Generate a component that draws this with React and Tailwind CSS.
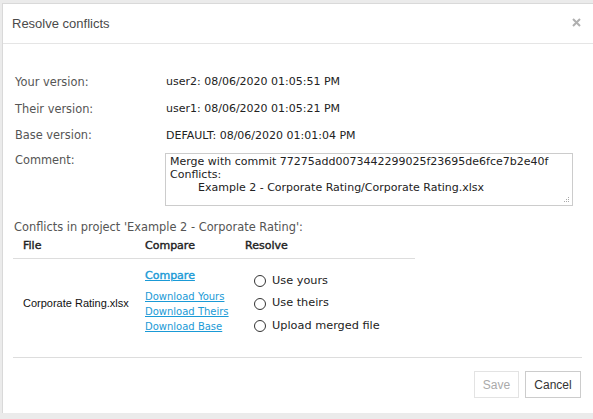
import React from "react";

const body = { fontFamily: '"DejaVu Sans", Verdana, sans-serif' };
const arial = { fontFamily: '"Liberation Sans", Arial, sans-serif' };

function Radio({ label }) {
  return (
    <label className="flex items-center h-[22.5px]">
      <span className="w-[12px] h-[12px] rounded-full border border-[#333] bg-white mr-[6px]"></span>
      <span className="text-[11.3px] text-[#222]">{label}</span>
    </label>
  );
}

export default function App() {
  const comment =
    "Merge with commit 77275add0073442299025f23695de6fce7b2e40f\nConflicts:\n\tExample 2 - Corporate Rating/Corporate Rating.xlsx";
  return (
    <div className="w-[593px] h-[419px] bg-[#ebebeb] pt-[3px] pl-[2px] overflow-hidden" style={body}>
      <div className="h-[410px] bg-white border-l border-t border-[#d9d9d9] flex flex-col">
        <div className="h-[40px] flex items-center justify-between pl-[9px] pr-[12px] border-b border-[#e5e5e5]">
          <span className="text-[13px] text-[#4a4a4a]" style={arial}>Resolve conflicts</span>
          <svg width="9" height="9" viewBox="0 0 9 9" className="mb-[2px]">
            <path d="M1 1L8 8M8 1L1 8" stroke="#b0b0b0" strokeWidth="2" />
          </svg>
        </div>
        <div className="pl-[12px] pr-[11px] pt-[25px] text-[11px]">
          <div className="flex items-center h-[27px]">
            <span className="w-[151px] text-[11.4px] text-[#555]">Your version:</span>
            <span className="text-[#222]">user2: 08/06/2020 01:05:51 PM</span>
          </div>
          <div className="flex items-center h-[27px]">
            <span className="w-[151px] text-[11.4px] text-[#555]">Their version:</span>
            <span className="text-[#222]">user1: 08/06/2020 01:05:21 PM</span>
          </div>
          <div className="flex items-center h-[26px]">
            <span className="w-[151px] text-[11.4px] text-[#555]">Base version:</span>
            <span className="text-[#222]">DEFAULT: 08/06/2020 01:01:04 PM</span>
          </div>
          <div className="flex mt-[4px]">
            <span className="w-[150px] text-[11.4px] text-[#555] pt-[1px] leading-[13px]">Comment:</span>
            <div className="relative">
              <textarea
                readOnly
                value={comment}
                className="block w-[408px] h-[53px] border border-[#ccc] px-[4px] py-[1px] text-[11px] leading-[13px] text-[#222] outline-none resize-none [tab-size:8]"
                style={body}
              />
              <svg width="7" height="7" viewBox="0 0 7 7" className="absolute right-[3px] bottom-[3px]">
                <rect x="5" y="1" width="1" height="1" fill="#aaa" />
                <rect x="3" y="3" width="1" height="1" fill="#aaa" />
                <rect x="5" y="3" width="1" height="1" fill="#aaa" />
                <rect x="1" y="5" width="1" height="1" fill="#aaa" />
                <rect x="3" y="5" width="1" height="1" fill="#aaa" />
                <rect x="5" y="5" width="1" height="1" fill="#aaa" />
              </svg>
            </div>
          </div>
          <div className="mt-[14px] h-[14px] leading-[14px] text-[11.4px] text-[#555] -ml-[1px]">
            Conflicts in project 'Example 2 - Corporate Rating':
          </div>
          <div className="w-[402px] -ml-[2px]">
            <div className="flex h-[25px] items-center border-b border-[#ddd] text-[#222] [-webkit-text-stroke:0.4px_#222]">
              <span className="w-[132px] pl-[10px]">File</span>
              <span className="w-[100px]">Compare</span>
              <span>Resolve</span>
            </div>
            <div className="flex h-[98px]">
              <div className="w-[132px] pl-[10px] pt-[36px] text-[11px] text-[#111]" style={arial}>
                Corporate Rating.xlsx
              </div>
              <div className="w-[100px] pt-[9px] flex flex-col items-start">
                <a className="text-[11px] text-[#1a9ad6] underline leading-[16px] [-webkit-text-stroke:0.4px_#1a9ad6]" href="#">Compare</a>
                <a className="mt-[5px] text-[10px] text-[#1a9ad6] underline leading-[15px]" href="#">Download Yours</a>
                <a className="text-[10px] text-[#1a9ad6] underline leading-[15px]" href="#">Download Theirs</a>
                <a className="text-[10px] text-[#1a9ad6] underline leading-[15px]" href="#">Download Base</a>
              </div>
              <div className="pl-[9px] pt-[11px]">
                <Radio label="Use yours" />
                <Radio label="Use theirs" />
                <Radio label="Upload merged file" />
              </div>
            </div>
          </div>
          <div className="-ml-[2px] border-t border-[#ddd] pt-[13px] flex justify-end gap-[6px] pr-[1px]" style={arial}>
            <button className="w-[45px] h-[27px] border border-[#e3e3e3] text-[12px] text-[#aaa] bg-white">Save</button>
            <button className="w-[56px] h-[27px] border border-[#ccc] text-[12px] text-[#333] bg-white">Cancel</button>
          </div>
        </div>
      </div>
    </div>
  );
}
